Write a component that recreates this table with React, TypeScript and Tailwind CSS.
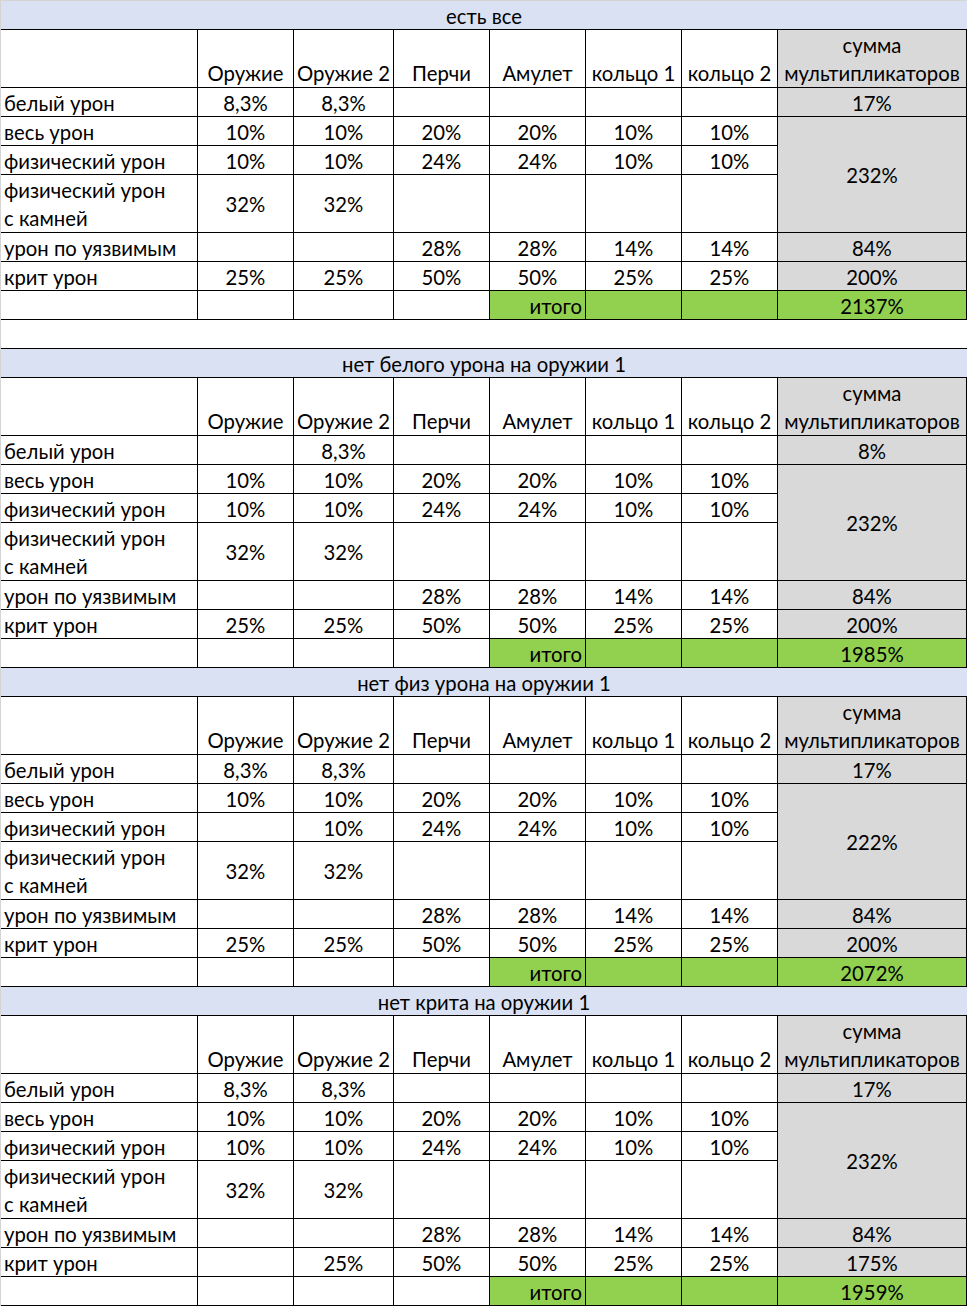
import React from "react";

type T = {
  title: string;
  white: string[];
  whiteSum: string;
  all: string[];
  phys: string[];
  stone: string[];
  merged: string;
  vuln: string[];
  vulnSum: string;
  crit: string[];
  critSum: string;
  total: string;
};

const ALL = ["10%", "10%", "20%", "20%", "10%", "10%"];
const PHYS = ["10%", "10%", "24%", "24%", "10%", "10%"];
const STONE = ["32%", "32%", "", "", "", ""];
const VULN = ["", "", "28%", "28%", "14%", "14%"];
const CRIT = ["25%", "25%", "50%", "50%", "25%", "25%"];
const WHITE = ["8,3%", "8,3%", "", "", "", ""];

const TABLES: T[] = [
  { title: "есть все", white: WHITE, whiteSum: "17%", all: ALL, phys: PHYS, stone: STONE, merged: "232%", vuln: VULN, vulnSum: "84%", crit: CRIT, critSum: "200%", total: "2137%" },
  { title: "нет белого урона на оружии 1", white: ["", "8,3%", "", "", "", ""], whiteSum: "8%", all: ALL, phys: PHYS, stone: STONE, merged: "232%", vuln: VULN, vulnSum: "84%", crit: CRIT, critSum: "200%", total: "1985%" },
  { title: "нет физ урона на оружии 1", white: WHITE, whiteSum: "17%", all: ALL, phys: ["", "10%", "24%", "24%", "10%", "10%"], stone: STONE, merged: "222%", vuln: VULN, vulnSum: "84%", crit: CRIT, critSum: "200%", total: "2072%" },
  { title: "нет крита на оружии 1", white: WHITE, whiteSum: "17%", all: ALL, phys: PHYS, stone: STONE, merged: "232%", vuln: VULN, vulnSum: "84%", crit: ["", "25%", "50%", "50%", "25%", "25%"], critSum: "175%", total: "1959%" },
];

const HEAD = ["Оружие", "Оружие 2", "Перчи", "Амулет", "кольцо 1", "кольцо 2"];

function Cell({ children, className = "" }: { children?: React.ReactNode; className?: string }) {
  return (
    <div className={`border-r border-b border-black flex leading-[28px] whitespace-nowrap ${className}`}>
      {children}
    </div>
  );
}

function Label({ children, className = "" }: { children?: React.ReactNode; className?: string }) {
  return <Cell className={`items-center justify-start pl-[3px] pt-[1px] ${className}`}>{children}</Cell>;
}

function Val({ v, className = "" }: { v?: string; className?: string }) {
  return <Cell className={`items-center justify-center pt-[1px] ${className}`}>{v}</Cell>;
}

function Table({ t }: { t: T }) {
  return (
    <div>
      <div className="h-[29px] bg-[#D9E1F2] border-b border-black flex items-center justify-center leading-[28px] pt-[2px]">
        {t.title}
      </div>
      <div className="grid grid-cols-[197px_96px_100px_96px_96px_96px_96px_189px] grid-rows-[58px_29px_29px_29px_58px_29px_29px_29px]">
        <Cell />
        {HEAD.map((h) => (
          <Cell key={h} className="items-end justify-center">
            {h}
          </Cell>
        ))}
        <Cell className="bg-[#D9D9D9] flex-col items-center justify-end pt-[1px]">
          <span>сумма</span>
          <span>мультипликаторов</span>
        </Cell>

        <Label>белый урон</Label>
        {t.white.map((v, i) => (
          <Val key={i} v={v} />
        ))}
        <Val v={t.whiteSum} className="bg-[#D9D9D9]" />

        <Label>весь урон</Label>
        {t.all.map((v, i) => (
          <Val key={i} v={v} />
        ))}
        <Val v={t.merged} className="bg-[#D9D9D9] row-span-3" />

        <Label>физический урон</Label>
        {t.phys.map((v, i) => (
          <Val key={i} v={v} />
        ))}

        <Cell className="flex-col justify-center items-start pl-[3px] pt-[1px]">
          <span>физический урон</span>
          <span>с камней</span>
        </Cell>
        {t.stone.map((v, i) => (
          <Val key={i} v={v} />
        ))}

        <Label>урон по уязвимым</Label>
        {t.vuln.map((v, i) => (
          <Val key={i} v={v} />
        ))}
        <Val v={t.vulnSum} className="bg-[#D9D9D9]" />

        <Label>крит урон</Label>
        {t.crit.map((v, i) => (
          <Val key={i} v={v} />
        ))}
        <Val v={t.critSum} className="bg-[#D9D9D9]" />

        <Cell />
        <Cell />
        <Cell />
        <Cell />
        <Cell className="bg-[#92D050] items-center justify-end pr-[3px] pt-[1px]">итого</Cell>
        <Cell className="bg-[#92D050]" />
        <Cell className="bg-[#92D050]" />
        <Val v={t.total} className="bg-[#92D050]" />
      </div>
    </div>
  );
}

export default function App() {
  return (
    <div className="w-[967px] h-[1306px] bg-white border-l border-t border-[#d4d4d4] text-black text-[20.3px] [font-family:Lato,sans-serif] overflow-hidden">
      <Table t={TABLES[0]} />
      <div className="h-[29px] border-b border-black" />
      <Table t={TABLES[1]} />
      <Table t={TABLES[2]} />
      <Table t={TABLES[3]} />
    </div>
  );
}
